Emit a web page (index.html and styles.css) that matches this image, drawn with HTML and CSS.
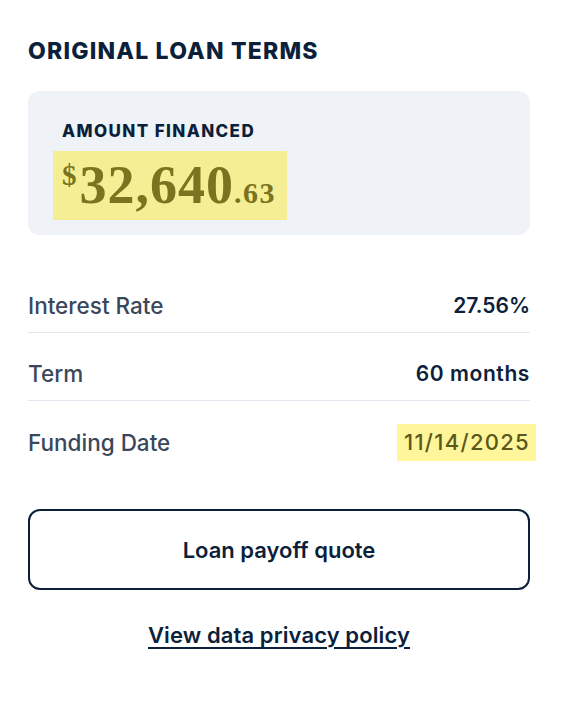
FILE: index.html
```html
<!DOCTYPE html>
<html lang="en">
<head>
<meta charset="utf-8">
<title>Original Loan Terms</title>
<link rel="stylesheet" href="styles.css">
</head>
<body>
<main class="card">
  <h2 class="title">ORIGINAL LOAN TERMS</h2>
  <section class="amount-box">
    <div class="amount-label">AMOUNT FINANCED</div>
    <div class="amount"><span class="amount-cur">$</span><span class="amount-main">32,640</span><span class="amount-cents">.63</span></div>
  </section>
  <dl class="terms">
    <div class="row">
      <dt>Interest Rate</dt>
      <dd>27.56%</dd>
    </div>
    <div class="row">
      <dt>Term</dt>
      <dd>60 months</dd>
    </div>
    <div class="row">
      <dt>Funding Date</dt>
      <dd><span class="date">11/14/2025</span></dd>
    </div>
  </dl>
  <button class="btn" type="button">Loan payoff quote</button>
  <a class="link" href="#">View data privacy policy</a>
</main>
</body>
</html>
```
FILE: styles.css
```css
* { box-sizing: border-box; }
html, body { margin: 0; padding: 0; background: #ffffff; }
body {
  font-family: "Inter", "Lato", sans-serif;
  color: #0c1f3b;
  width: 562px;
  height: 720px;
  overflow: hidden;
}
.card {
  display: flex;
  flex-direction: column;
  padding: 37px 32px 0 28px;
}
.title {
  margin: 0 0 26px;
  font-size: 23px;
  line-height: 28px;
  font-weight: 800;
  letter-spacing: 1.2px;
  color: #0c1f3b;
}
.amount-box {
  background: #eff2f6;
  border-radius: 12px;
  padding: 30px 34px 15px;
  height: 144px;
}
.amount-label {
  font-size: 17px;
  line-height: 20px;
  font-weight: 800;
  letter-spacing: 1.4px;
  color: #0c1f3b;
}
.amount {
  display: inline-block;
  margin: 10px 0 0 -9px;
  padding: 0 11px 0 9px;
  height: 69px;
  line-height: 69px;
  background: #f5ee94;
  font-family: "Liberation Serif", "Times New Roman", serif;
  font-weight: 700;
  color: #7a7420;
  white-space: nowrap;
}
.amount-cur {
  font-size: 29px;
  vertical-align: 18px;
  line-height: 0;
  margin-right: 3px;
}
.amount-main {
  font-size: 54px;
  letter-spacing: 1px;
}
.amount-cents {
  font-size: 30px;
  letter-spacing: 1.5px;
}
.terms {
  margin: 30px 0 0;
  padding: 0;
}
.row {
  display: flex;
  justify-content: space-between;
  align-items: center;
  padding: 27px 0 12px;
  line-height: 28px;
  border-bottom: 1px solid #e2e8ef;
}
.row:last-child { border-bottom: none; }
.row dt {
  font-size: 22.5px;
  font-weight: 500;
  color: #3a475b;
}
.row dd {
  margin: 0;
  font-size: 21px;
  font-weight: 600;
  color: #0c1f3b;
}
.row:nth-child(2) dd { letter-spacing: 0.6px; }
.date {
  display: inline-block;
  background: #fff59a;
  color: #5a581c;
  font-size: 22px;
  font-weight: 500;
  letter-spacing: 1.3px;
  line-height: 28px;
  padding: 4px 6px 5px 7px;
  margin: -4px -6px -5px 0;
}
.btn {
  margin-top: 40px;
  height: 81px;
  border: 2px solid #0c1f3b;
  border-radius: 12px;
  background: #ffffff;
  font-family: inherit;
  font-size: 22px;
  font-weight: 600;
  color: #0c1f3b;
}
.link {
  align-self: center;
  margin-top: 32px;
  font-size: 22px;
  line-height: 26px;
  font-weight: 600;
  letter-spacing: 0.1px;
  color: #0c1f3b;
  text-decoration: underline;
  text-decoration-thickness: 2px;
  text-underline-offset: 4px;
}
```
